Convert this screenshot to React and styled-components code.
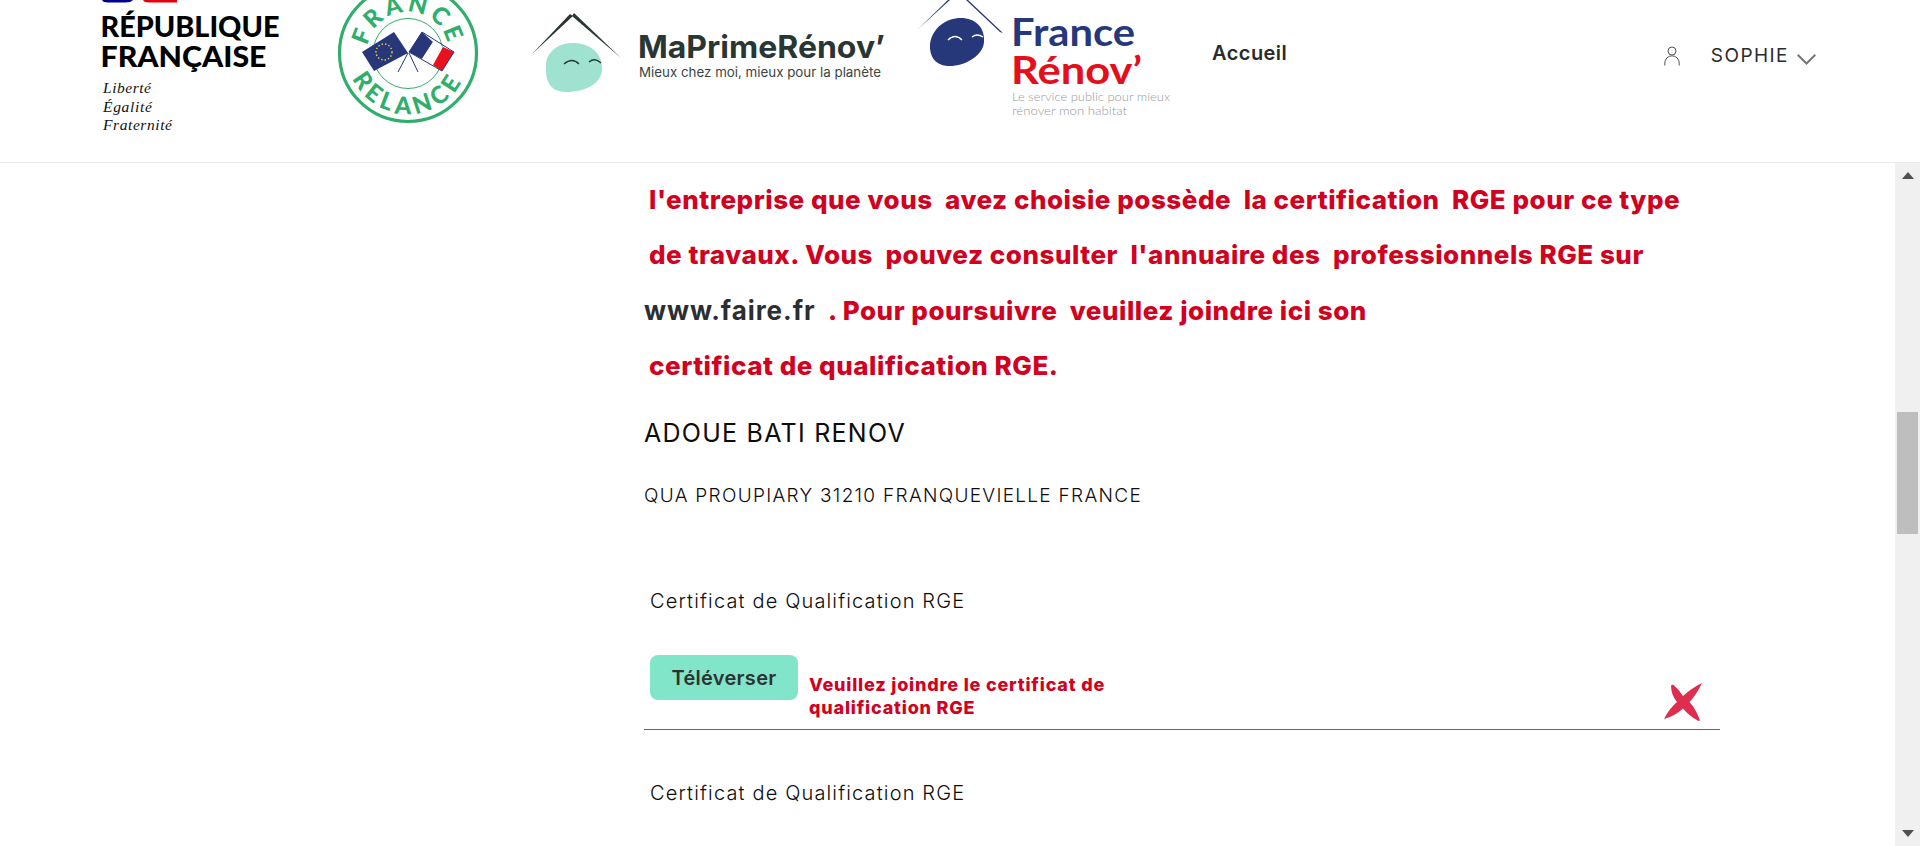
import React from "react";
import styled, { createGlobalStyle } from "styled-components";

const Global = createGlobalStyle`
  html, body { margin: 0; padding: 0; height: 846px; overflow: hidden; background: #fff; }
  * { box-sizing: border-box; }
  body { font-family: Inter, "Open Sans", sans-serif; color: #111; }
`;

const Page = styled.div`
  display: flex;
  flex-direction: column;
  height: 846px;
  overflow: hidden;
`;

const Header = styled.header`
  flex: 0 0 163px;
  display: flex;
  align-items: flex-start;
  border-bottom: 1px solid #e8e8e8;
  overflow: hidden;
`;

const LogoSvg = styled.svg`
  display: block;
  flex: 0 0 auto;
  height: 162px;
`;

const NavLink = styled.a`
  margin: 41px 0 0 2px;
  font-size: 20px;
  line-height: 24px;
  font-weight: 600;
  letter-spacing: 0.45px;
  color: #2a2a2a;
`;

const UserArea = styled.div`
  margin: 44px 0 0 auto;
  padding-right: 104px;
  display: flex;
  align-items: center;
`;

const UserName = styled.span`
  margin-left: 31px;
  font-size: 19px;
  line-height: 24px;
  letter-spacing: 1.45px;
  color: #2b2b2b;
`;

const Chevron = styled.svg`
  margin: 6px 0 0 8px;
`;

const Body = styled.div`
  flex: 1;
  display: flex;
  min-height: 0;
`;

const Content = styled.main`
  flex: 1;
  min-width: 0;
  padding: 9px 0 0 644px;
  overflow: hidden;
`;

const Column = styled.div`
  width: 1076px;
`;

const Warning = styled.p`
  margin: 0;
  padding-left: ${(p) => (p.$flush ? 0 : 5)}px;
  font-size: 26px;
  line-height: 55.3px;
  font-weight: 800;
  letter-spacing: 0.53px;
  color: #d0021f;
  white-space: pre;
`;

const Link = styled.span`
  color: #2b2f33;
  font-weight: 700;
  letter-spacing: 0.95px;
`;

const Company = styled.h2`
  margin: 24px 0 0;
  font-size: 25px;
  line-height: 32px;
  font-weight: 400;
  letter-spacing: 1.25px;
  color: #0c0c0c;
`;

const Address = styled.p`
  margin: 35px 0 0;
  font-size: 19px;
  line-height: 24px;
  font-weight: 300;
  letter-spacing: 1.3px;
  color: #0c0c0c;
`;

const DocBlock = styled.section`
  padding-top: ${(p) => p.$top}px;
`;

const DocTitle = styled.div`
  padding-left: 6px;
  font-size: 20px;
  line-height: 24px;
  font-weight: 300;
  letter-spacing: 1.15px;
  color: #0c0c0c;
`;

const DocRow = styled.div`
  margin-top: 42px;
  height: 75px;
  padding-left: 6px;
  display: flex;
  align-items: flex-start;
  border-bottom: 1px solid #666;
`;

const UploadButton = styled.button`
  width: 148px;
  height: 45px;
  border: 0;
  border-radius: 8px;
  background: #80e5c9;
  color: #2e3233;
  font: 600 20px/24px Inter, sans-serif;
  letter-spacing: 0.3px;
  padding: 0;
`;

const ErrorText = styled.div`
  margin: 18px 0 0 11px;
  width: 320px;
  font-size: 18px;
  line-height: 23px;
  font-weight: 800;
  letter-spacing: 0.8px;
  color: #d0021f;
`;

const Cross = styled.svg`
  margin: 28px 18px 0 auto;
`;

const Scrollbar = styled.div`
  flex: 0 0 25px;
  display: flex;
  flex-direction: column;
  background: #f0f0f0;
`;

const ScrollArrow = styled.div`
  flex: 0 0 25px;
  display: flex;
  align-items: center;
  justify-content: center;
`;

const Track = styled.div`
  flex: 1;
  padding: ${(p) => p.$top}px 2px 0;
`;

const Thumb = styled.div`
  height: 122px;
  background: #bebebe;
`;

const RepubliqueLogo = () => (
  <LogoSvg width="320" viewBox="0 0 320 162">
    <path d="M102 0h31q-2 2.5-8 2.5h-17q-5 0-6-2.5z" fill="#000091" />
    <path d="M143 0h34v2.5h-28q-5 0-6-2.5z" fill="#e1000f" />
    <text x="100.5" y="37" fontFamily="Lato, sans-serif" fontWeight="900" fontSize="28" textLength="179" lengthAdjust="spacingAndGlyphs" fill="#000">RÉPUBLIQUE</text>
    <text x="100.5" y="67" fontFamily="Lato, sans-serif" fontWeight="900" fontSize="28" textLength="166" lengthAdjust="spacingAndGlyphs" fill="#000">FRANÇAISE</text>
    <g fontFamily="'Liberation Serif', serif" fontStyle="italic" fontSize="15.5" fill="#111">
      <text x="103" y="93" textLength="48">Liberté</text>
      <text x="103" y="112" textLength="49">Égalité</text>
      <text x="103" y="130" textLength="69">Fraternité</text>
    </g>
  </LogoSvg>
);

const RelanceLogo = () => (
  <LogoSvg width="180" viewBox="320 0 180 162">
    <circle cx="408" cy="53" r="68.5" fill="none" stroke="#2fae6c" strokeWidth="3.2" />
    <circle cx="408" cy="53.5" r="35" fill="none" stroke="#2fae6c" strokeWidth="1" />
    <defs>
      <path id="relTop" d="M367 53a41 41 0 0 1 82 0" />
      <path id="relBottom" d="M347 53a61 61 0 0 0 122 0" />
    </defs>
    <text fontFamily="Lato, sans-serif" fontWeight="900" fontSize="24" letterSpacing="3.4" fill="#2fae6c" textAnchor="middle">
      <textPath href="#relTop" startOffset="50%">FRANCE</textPath>
    </text>
    <text fontFamily="Lato, sans-serif" fontWeight="900" fontSize="24" letterSpacing="4.6" fill="#2fae6c" textAnchor="middle">
      <textPath href="#relBottom" startOffset="50%">RELANCE</textPath>
    </text>
    <path d="M408 53l-10 19M409 53l9 19" stroke="#27377a" strokeWidth="1" fill="none" />
    <path d="M362 52l32-20 14 21-34 18z" fill="#27377a" />
    <circle cx="384" cy="52" r="8" fill="none" stroke="#f3d33b" strokeWidth="1.4" strokeDasharray="1.4 2.1" />
    <path d="M422 32l11 10-11 17-13-7z" fill="#27377a" />
    <path d="M433 42l10 5-10 18-11-6z" fill="#fff" />
    <path d="M443 47l11 5-12 19-9-6z" fill="#e8111d" />
    <path d="M422 32l32 20-12 19-33-19z" fill="none" stroke="#27377a" strokeWidth="1" />
  </LogoSvg>
);

const PrimeLogo = () => (
  <LogoSvg width="408" viewBox="500 0 408 162">
    <path d="M532 54L570 14l3 2z" fill="#2a3633" />
    <path d="M574 13l47 45-49-42z" fill="#2a3633" />
    <path d="M546 66c0-15 13-23 27-23 14 0 29 7 29 26 0 14-16 23-36 23-14 0-21-9-20-26z" fill="#a0e2d0" />
    <path d="M564 64q8-7 15 0M589 62q6-5 12 1" fill="none" stroke="#2a3633" strokeWidth="1.4" />
    <text x="638" y="58" fontFamily="Inter, sans-serif" fontWeight="700" fontSize="31" textLength="247" lengthAdjust="spacingAndGlyphs" fill="#2a3633">MaPrimeRénov’</text>
    <text x="639" y="77" fontFamily="Inter, sans-serif" fontSize="13" textLength="242" lengthAdjust="spacingAndGlyphs" fill="#3b4442">Mieux chez moi, mieux pour la planète</text>
  </LogoSvg>
);

const RenovLogo = () => (
  <LogoSvg width="302" viewBox="908 0 302 162">
    <path d="M917 30l31-30h2z" fill="#26387a" />
    <path d="M968 0l35 33-3-1-34-32z" fill="#26387a" />
    <path d="M930 44c2-16 16-26 31-26 14 0 24 9 23 24-1 14-20 25-37 24-12-1-18-10-17-22z" fill="#26387a" />
    <path d="M948 40q7-7 14 0M972 37q5-4 11 0" fill="none" stroke="#fff" strokeWidth="1.4" />
    <text x="1011" y="46" fontFamily="Lato, sans-serif" fontWeight="700" fontSize="39" textLength="124" lengthAdjust="spacingAndGlyphs" fill="#26387a">France</text>
    <text x="1011" y="84" fontFamily="Lato, sans-serif" fontWeight="700" fontSize="39" textLength="131" lengthAdjust="spacingAndGlyphs" fill="#e30f1b">Rénov’</text>
    <g fontFamily="Lato, sans-serif" fontSize="12.5" fontWeight="300" fill="#999">
      <text x="1012" y="101" textLength="158" lengthAdjust="spacingAndGlyphs">Le service public pour mieux</text>
      <text x="1012" y="115" textLength="115" lengthAdjust="spacingAndGlyphs">rénover mon habitat</text>
    </g>
  </LogoSvg>
);

const UserIcon = () => (
  <svg width="16" height="20" viewBox="0 0 16 20" fill="none" stroke="#555" strokeWidth="1">
    <circle cx="8" cy="5" r="4" />
    <path d="M.8 19.5V17a7.2 7.2 0 0 1 14.4 0v2.5" />
  </svg>
);

const App = () => (
  <>
    <Global />
    <Page>
      <Header>
        <RepubliqueLogo />
        <RelanceLogo />
        <PrimeLogo />
        <RenovLogo />
        <NavLink>Accueil</NavLink>
        <UserArea>
          <UserIcon />
          <UserName>SOPHIE</UserName>
          <Chevron width="19" height="11" viewBox="0 0 19 11" fill="none" stroke="#777" strokeWidth="2">
            <path d="M.7.7l8.8 8.8 8.8-8.8" />
          </Chevron>
        </UserArea>
      </Header>
      <Body>
        <Content>
          <Column>
            <Warning>l'entreprise que vous  avez choisie possède  la certification  RGE pour ce type</Warning>
            <Warning>de travaux. Vous  pouvez consulter  l'annuaire des  professionnels RGE sur</Warning>
            <Warning $flush><Link>www.faire.fr</Link>  . Pour poursuivre  veuillez joindre ici son</Warning>
            <Warning>certificat de qualification RGE.</Warning>
            <Company>ADOUE BATI RENOV</Company>
            <Address>QUA PROUPIARY 31210 FRANQUEVIELLE FRANCE</Address>
            <DocBlock $top={81}>
              <DocTitle>Certificat de Qualification RGE</DocTitle>
              <DocRow>
                <UploadButton>Téléverser</UploadButton>
                <ErrorText>Veuillez joindre le certificat de qualification RGE</ErrorText>
                <Cross width="38" height="38" viewBox="0 0 38 38">
                  <path d="M7 2.5L9 1.5Q15 6.5 19 13Q27 5.5 38 0Q33 11 25.5 19Q32 26 36 37.5L34.5 38Q25 33 19 25.5Q11 33 0 36Q5 26 13 19Q7 12 7 2.5z" fill="#de2d4f" />
                </Cross>
              </DocRow>
            </DocBlock>
            <DocBlock $top={51}>
              <DocTitle>Certificat de Qualification RGE</DocTitle>
            </DocBlock>
          </Column>
        </Content>
        <Scrollbar>
          <ScrollArrow>
            <svg width="12" height="7" viewBox="0 0 12 7"><path d="M6 0l6 7H0z" fill="#505050" /></svg>
          </ScrollArrow>
          <Track $top={224}><Thumb /></Track>
          <ScrollArrow>
            <svg width="12" height="7" viewBox="0 0 12 7"><path d="M0 0h12L6 7z" fill="#505050" /></svg>
          </ScrollArrow>
        </Scrollbar>
      </Body>
    </Page>
  </>
);

export default App;
